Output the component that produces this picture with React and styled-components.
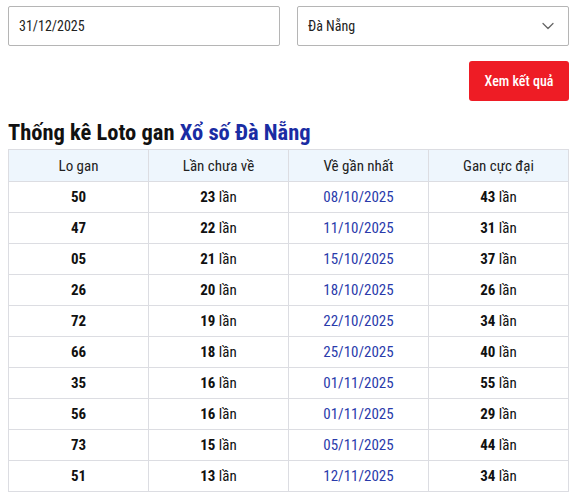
import React from "react";
import styled, { createGlobalStyle } from "styled-components";
import { FiChevronDown } from "react-icons/fi";

const GlobalStyle = createGlobalStyle`
  body {
    margin: 0;
    background: #fff;
    font-family: "Roboto Condensed", Roboto, "Liberation Sans", sans-serif;
    font-stretch: condensed;
    color: #111;
  }
`;

const Page = styled.div`
  padding: 6px 9px 0 8px;
  width: 578px;
  box-sizing: border-box;
`;

const Filters = styled.div`
  display: grid;
  grid-template-columns: 1fr 1fr;
  gap: 17px;
`;

const Field = styled.div`
  height: 40px;
  box-sizing: border-box;
  border: 1px solid #b5b5b5;
  border-radius: 2px;
  display: flex;
  align-items: center;
  justify-content: space-between;
  padding: 0 10px 0 10px;
  font-size: 14px;
  color: #222;
`;

const Actions = styled.div`
  display: flex;
  justify-content: flex-end;
  margin-top: 15px;
`;

const Button = styled.button`
  width: 100px;
  height: 40px;
  border: none;
  border-radius: 3px;
  background: #ee1c25;
  color: #fff;
  font-family: inherit;
  font-stretch: condensed;
  font-size: 14px;
  font-weight: 500;
`;

const Title = styled.h2`
  margin: 18px 0 4px;
  font-size: 22.5px;
  font-weight: 700;
  line-height: 26px;
  color: #111;
`;

const Place = styled.span`
  color: #1a2ca3;
`;

const Table = styled.table`
  width: 100%;
  border-collapse: collapse;
  table-layout: fixed;
  font-size: 15px;
`;

const Th = styled.th`
  height: 31px;
  padding: 0;
  border: 1px solid #dcdde2;
  background: #eef6fd;
  font-weight: 400;
  color: #222;
`;

const Td = styled.td`
  height: 30px;
  padding: 0;
  border: 1px solid #dcdde2;
  text-align: center;
  color: ${(p) => (p.$date ? "#2a3bab" : "#111")};
`;

const rows = [
  ["50", "23", "08/10/2025", "43"],
  ["47", "22", "11/10/2025", "31"],
  ["05", "21", "15/10/2025", "37"],
  ["26", "20", "18/10/2025", "26"],
  ["72", "19", "22/10/2025", "34"],
  ["66", "18", "25/10/2025", "40"],
  ["35", "16", "01/11/2025", "55"],
  ["56", "16", "01/11/2025", "29"],
  ["73", "15", "05/11/2025", "44"],
  ["51", "13", "12/11/2025", "34"],
];

export default function App() {
  return (
    <Page>
      <GlobalStyle />
      <Filters>
        <Field>31/12/2025</Field>
        <Field>
          Đà Nẵng
          <FiChevronDown size={20} color="#666" strokeWidth={1.5} />
        </Field>
      </Filters>
      <Actions>
        <Button>Xem kết quả</Button>
      </Actions>
      <Title>
        Thống kê Loto gan <Place>Xổ số Đà Nẵng</Place>
      </Title>
      <Table>
        <thead>
          <tr>
            <Th>Lo gan</Th>
            <Th>Lần chưa về</Th>
            <Th>Về gần nhất</Th>
            <Th>Gan cực đại</Th>
          </tr>
        </thead>
        <tbody>
          {rows.map(([lo, miss, date, max], i) => (
            <tr key={i}>
              <Td>
                <b>{lo}</b>
              </Td>
              <Td>
                <b>{miss}</b> lần
              </Td>
              <Td $date>{date}</Td>
              <Td>
                <b>{max}</b> lần
              </Td>
            </tr>
          ))}
        </tbody>
      </Table>
    </Page>
  );
}
